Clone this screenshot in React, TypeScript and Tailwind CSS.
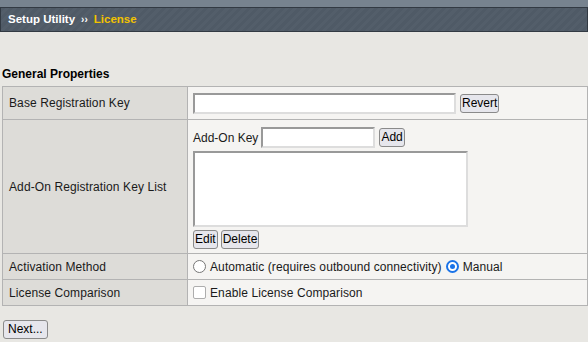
import React from "react";

function Btn({ children, className = "" }: { children: React.ReactNode; className?: string }) {
    return (
        <button
            className={`h-[19px] px-[1px] leading-[17px] text-[12px] tracking-normal text-black bg-[#e6e6ec] border border-[#8a8a8a] rounded-[3px] ${className}`}
        >
            {children}
        </button>
    );
}

function TextBox({ className = "" }: { className?: string }) {
    return (
        <div
            className={`bg-white border-2 border-t-[#999] border-l-[#999] border-b-[#ddd] border-r-[#ddd] ${className}`}
        />
    );
}

export default function App() {
    return (
        <div className="w-[588px] h-[342px] bg-[#e8e7e3] font-['Liberation_Sans',Arial,sans-serif] text-[12px] tracking-[0.1px] text-[#1a1a1a] overflow-hidden">
            {/* Top bar */}
            <div className="h-[7px] bg-[#77838f]" />
            <div className="h-[25px] flex items-center pl-[7px] bg-[repeating-linear-gradient(135deg,#4f5a66_0px,#4f5a66_3px,#535e6a_3px,#535e6a_6px)] border border-[#323a43] font-bold text-[11.5px] tracking-normal">
                <span className="text-white">Setup Utility</span>
                <span className="text-white text-[10px] mx-[6px]">››</span>
                <span className="text-[#f2c200]">License</span>
            </div>

            {/* Section title */}
            <div className="pt-[35px] pl-[2px] font-bold text-black leading-[14px] tracking-normal">General Properties</div>

            {/* Properties table */}
            <table className="mt-[5px] ml-[2px] w-[586px] border-collapse border border-[#a3a3a3]">
                <tbody>
                    <tr className="h-[33px]">
                        <td className="w-[185px] bg-[#dddcd8] border border-[#b3b3b3] pl-[6px] align-middle">Base Registration Key</td>
                        <td className="bg-[#f5f4f2] border border-[#b3b3b3] pl-[5px]">
                            <div className="flex items-center gap-[4px]">
                                <TextBox className="w-[263px] h-[21px]" />
                                <Btn>Revert</Btn>
                            </div>
                        </td>
                    </tr>
                    <tr className="h-[134px]">
                        <td className="bg-[#dddcd8] border border-[#b3b3b3] pl-[6px] align-middle">Add-On Registration Key List</td>
                        <td className="bg-[#f5f4f2] border border-[#b3b3b3] pl-[5px] align-top pt-[7px]">
                            <div className="flex items-center gap-[3px]">
                                <span className="tracking-normal">Add-On Key</span>
                                <TextBox className="w-[114px] h-[21px]" />
                                <Btn className="ml-[1px]">Add</Btn>
                            </div>
                            <TextBox className="w-[275px] h-[76px] mt-[3px]" />
                            <div className="flex gap-[3px] mt-[3px]">
                                <Btn>Edit</Btn>
                                <Btn>Delete</Btn>
                            </div>
                        </td>
                    </tr>
                    <tr className="h-[26px]">
                        <td className="bg-[#dddcd8] border border-[#b3b3b3] pl-[6px]">Activation Method</td>
                        <td className="bg-[#f5f4f2] border border-[#b3b3b3] pl-[5px]">
                            <div className="flex items-center">
                                <span className="w-[13px] h-[13px] rounded-full border border-[#767676] bg-white" />
                                <span className="ml-[4px]">Automatic (requires outbound connectivity)</span>
                                <span className="ml-[4px] w-[13px] h-[13px] rounded-full border-[2px] border-[#1a73e8] bg-white flex items-center justify-center">
                                    <span className="w-[5px] h-[5px] rounded-full bg-[#1a73e8]" />
                                </span>
                                <span className="ml-[4px]">Manual</span>
                            </div>
                        </td>
                    </tr>
                    <tr className="h-[26px]">
                        <td className="bg-[#dddcd8] border border-[#b3b3b3] pl-[6px]">License Comparison</td>
                        <td className="bg-[#f5f4f2] border border-[#b3b3b3] pl-[5px]">
                            <div className="flex items-center">
                                <span className="w-[13px] h-[13px] rounded-[2px] border border-[#adadad] bg-white" />
                                <span className="ml-[4px]">Enable License Comparison</span>
                            </div>
                        </td>
                    </tr>
                </tbody>
            </table>

            {/* Footer action */}
            <div className="pl-[3px] pt-[14px]">
                <Btn className="px-[4px]">Next...</Btn>
            </div>
        </div>
    );
}
